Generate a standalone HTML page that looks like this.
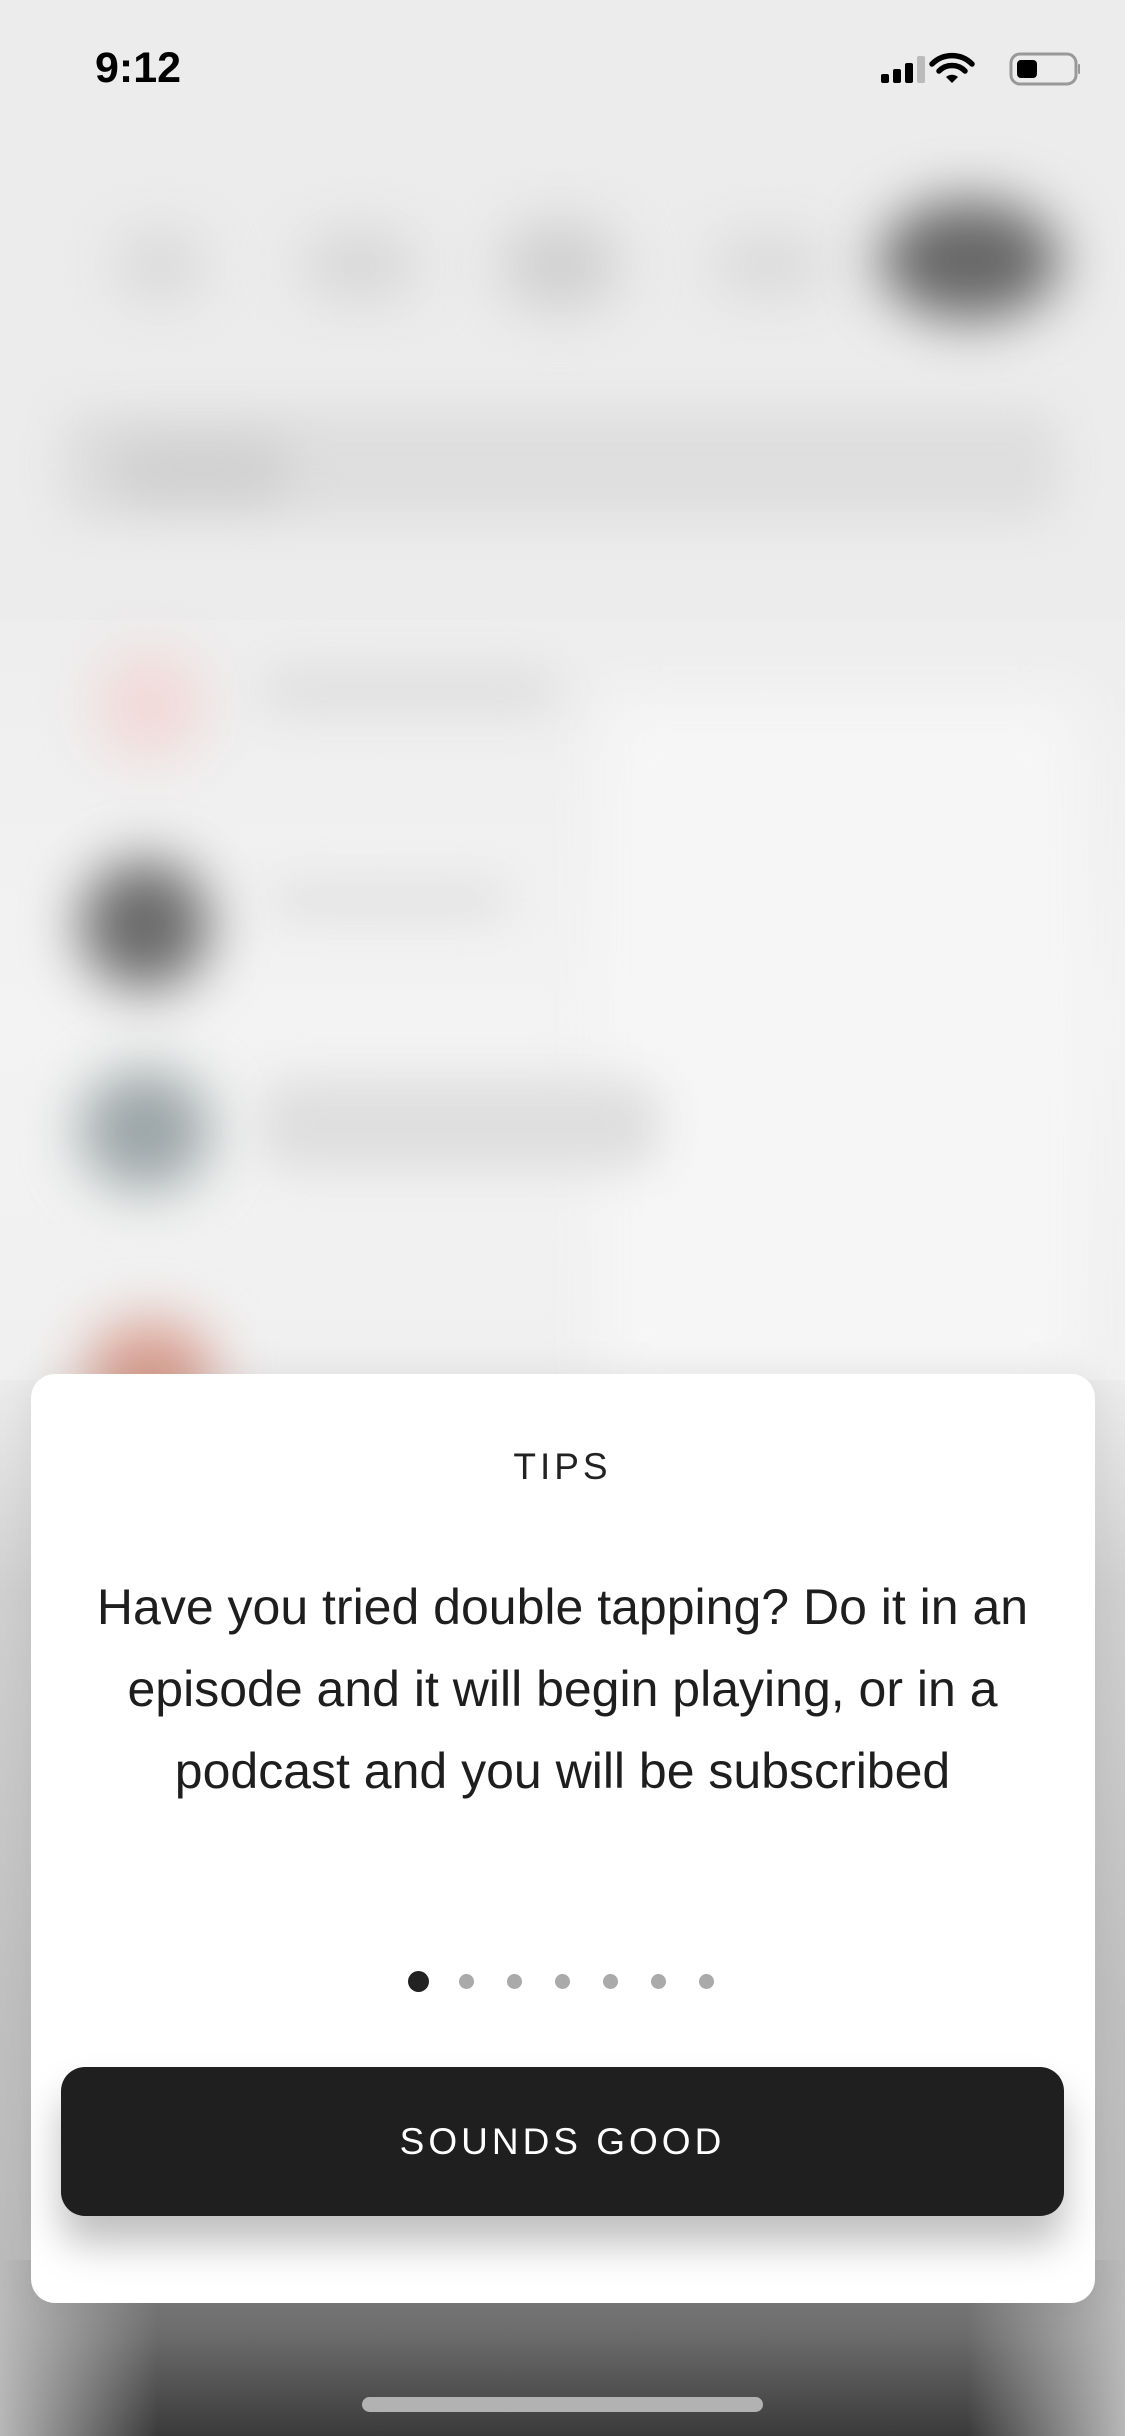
<!DOCTYPE html>
<html><head><meta charset="utf-8"><style>
*{margin:0;padding:0;box-sizing:border-box}
html,body{width:1125px;height:2436px;overflow:hidden;background:#ececec;font-family:"Liberation Sans",sans-serif}
.b{position:absolute;border-radius:50%;filter:blur(28px)}
.r{position:absolute;filter:blur(22px);border-radius:30px}
.abs{position:absolute}
.c{position:absolute;left:0;width:1125px;text-align:center}
</style></head><body>
<div class="abs" style="left:0;top:620px;width:1125px;height:1000px;background:linear-gradient(#eeeeee,#f3f3f3 40%,#eeeeee)"></div>
<div class="abs" style="left:600px;top:700px;width:480px;height:700px;background:#f6f6f6;filter:blur(30px)"></div>
<div class="b" style="left:115px;top:230px;width:90px;height:70px;background:#d8d8d8"></div>
<div class="b" style="left:300px;top:230px;width:120px;height:70px;background:#d6d6d6"></div>
<div class="b" style="left:500px;top:220px;width:120px;height:90px;background:#cfcfcf"></div>
<div class="b" style="left:710px;top:235px;width:120px;height:60px;background:#d8d8d8"></div>
<div class="b" style="left:880px;top:200px;width:180px;height:120px;background:#676767"></div>
<div class="r" style="left:60px;top:410px;width:1000px;height:110px;background:#dedede"></div>
<div class="r" style="left:110px;top:440px;width:180px;height:60px;background:#d0d0d0"></div>
<div class="b" style="left:95px;top:650px;width:110px;height:110px;background:#f1d9d8"></div>
<div class="r" style="left:260px;top:665px;width:300px;height:50px;background:#e0e0e0"></div>
<div class="b" style="left:80px;top:860px;width:130px;height:130px;background:#6a6a6a"></div>
<div class="r" style="left:270px;top:880px;width:240px;height:40px;background:#e2e2e2"></div>
<div class="b" style="left:80px;top:1070px;width:130px;height:120px;background:#9aa4a6"></div>
<div class="r" style="left:260px;top:1080px;width:400px;height:90px;background:#dedede"></div>
<div class="b" style="left:85px;top:1320px;width:130px;height:110px;background:#d89e90"></div>
<!-- bottom -->
<div class="abs" style="left:0;top:1380px;width:1125px;height:1056px;background:linear-gradient(#ececec,#d0d0d0 20%,#c0c0c0 60%,#b8b8b8)"></div>
<div class="abs" style="left:0;top:2260px;width:1125px;height:176px;background:linear-gradient(#8a8a8a,#6e6e6e 40%,#3a3a3a)"></div>
<div class="abs" style="left:0;top:2260px;width:1125px;height:176px;background:linear-gradient(90deg,rgba(190,190,190,0.95),rgba(190,190,190,0) 14%,rgba(190,190,190,0) 86%,rgba(190,190,190,0.95))"></div>
<!-- status bar -->
<div class="abs" style="left:95px;top:44px;font-size:43px;font-weight:bold;color:#000">9:12</div>
<svg class="abs" style="left:880px;top:50px" width="200" height="40" viewBox="0 0 200 40">
<rect x="1" y="24" width="8" height="9" rx="2" fill="#000"/>
<rect x="13" y="19" width="8" height="14" rx="2" fill="#000"/>
<rect x="25" y="13" width="8" height="20" rx="2" fill="#000"/>
<rect x="37" y="6" width="8" height="27" rx="2" fill="#bbb"/>
<path d="M92 14 a28 28 0 0 0 -40 0" stroke="#000" stroke-width="5.5" fill="none" stroke-linecap="round"/>
<path d="M85 21 a18 18 0 0 0 -26 0" stroke="#000" stroke-width="5.5" fill="none" stroke-linecap="round"/>
<path d="M66 27 l6 6 l6 -6 a9 9 0 0 0 -12 0z" fill="#000"/>
<rect x="131" y="4" width="65" height="30" rx="9" fill="none" stroke="#999" stroke-width="3"/>
<rect x="137" y="10" width="20" height="18" rx="4" fill="#000"/>
<rect x="198" y="14" width="3" height="10" rx="1.5" fill="#999"/>
</svg>
<!-- card -->
<div class="abs" style="left:31px;top:1374px;width:1064px;height:929px;background:#fff;border-radius:24px;box-shadow:0 0 40px rgba(0,0,0,0.08)"></div>
<div class="c" style="top:1446px;font-size:37px;letter-spacing:4px;color:#222">TIPS</div>
<div class="c" style="top:1566px;font-size:50px;line-height:82px;color:#1e1e1e">Have you tried double tapping? Do it in an<br>episode and it will begin playing, or in a<br>podcast and you will be subscribed</div>
<div class="abs" style="left:408px;top:1971px;width:21px;height:21px;border-radius:50%;background:#222"></div>
<div class="abs" style="left:459px;top:1974px;width:15px;height:15px;border-radius:50%;background:#aaa"></div>
<div class="abs" style="left:507px;top:1974px;width:15px;height:15px;border-radius:50%;background:#aaa"></div>
<div class="abs" style="left:555px;top:1974px;width:15px;height:15px;border-radius:50%;background:#aaa"></div>
<div class="abs" style="left:603px;top:1974px;width:15px;height:15px;border-radius:50%;background:#aaa"></div>
<div class="abs" style="left:651px;top:1974px;width:15px;height:15px;border-radius:50%;background:#aaa"></div>
<div class="abs" style="left:699px;top:1974px;width:15px;height:15px;border-radius:50%;background:#aaa"></div>
<div class="abs" style="left:61px;top:2067px;width:1003px;height:149px;border-radius:24px;background:#1f1f1f;box-shadow:0 28px 40px rgba(0,0,0,0.25);color:#fff;font-size:37px;letter-spacing:4px;text-align:center;line-height:149px">SOUNDS GOOD</div>
<div class="abs" style="left:362px;top:2397px;width:401px;height:15px;border-radius:8px;background:#b2b2b2"></div>
</body></html>
